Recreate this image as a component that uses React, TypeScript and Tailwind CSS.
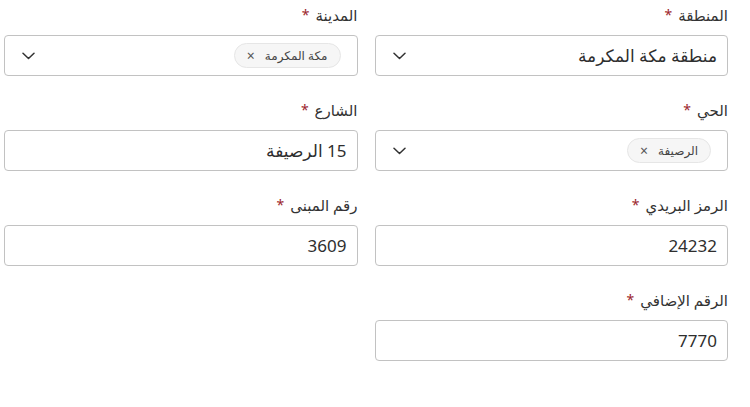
import React from "react";

const Chevron = () => (
  <svg width="13" height="8" viewBox="0 0 13 8" fill="none" className="shrink-0">
    <path d="M1 1.2 L6.5 6.5 L12 1.2" stroke="#333" strokeWidth="1.5" strokeLinecap="round" strokeLinejoin="round" />
  </svg>
);

const Label = ({ text }: { text: string }) => (
  <div className="h-[20px] mb-[10px] flex items-center text-[15px] leading-[20px] text-[#333]">
    <span>{text}</span>
    <span className="text-[#9c1f2e] mr-[6px] text-[14px]">*</span>
  </div>
);

const Chip = ({ text }: { text: string }) => (
  <span className="inline-flex items-center h-[25px] px-[12px] gap-[10px] rounded-full bg-[#f6f6f6] border border-[#e6e6e6] text-[12px] text-[#444]">
    <span>{text}</span>
    <span className="text-[14px] text-[#555] leading-none">×</span>
  </span>
);

const SelectBox = ({ value, chip }: { value?: string; chip?: string }) => (
  <div className="h-[41px] border border-[#c2c2c2] rounded-[4px] bg-white flex items-center justify-between pr-[16px] pl-[17px]">
    {chip ? <Chip text={chip} /> : <span className="text-[17px] text-[#2e2e2e] pr-[-6px] -mr-[6px]">{value}</span>}
    <Chevron />
  </div>
);

const InputBox = ({ value }: { value: string }) => (
  <div className="h-[41px] border border-[#c2c2c2] rounded-[4px] bg-white flex items-center pr-[10px] text-[17px] text-[#2e2e2e]">
    {value}
  </div>
);

const Field = ({ label, children }: { label: string; children: React.ReactNode }) => (
  <div>
    <Label text={label} />
    {children}
  </div>
);

export default function App() {
  return (
    <div
      dir="rtl"
      className="w-[750px] h-[407px] bg-white pt-[5px] pr-[22px] pl-[4px]"
      style={{ fontFamily: '"Noto Sans", "DejaVu Sans", sans-serif' }}
    >
      <div className="grid grid-cols-2 gap-x-[17px] gap-y-[24px]">
        <Field label="المنطقة">
          <SelectBox value="منطقة مكة المكرمة" />
        </Field>
        <Field label="المدينة">
          <SelectBox chip="مكة المكرمة" />
        </Field>
        <Field label="الحي">
          <SelectBox chip="الرصيفة" />
        </Field>
        <Field label="الشارع">
          <InputBox value="15 الرصيفة" />
        </Field>
        <Field label="الرمز البريدي">
          <InputBox value="24232" />
        </Field>
        <Field label="رقم المبنى">
          <InputBox value="3609" />
        </Field>
        <Field label="الرقم الإضافي">
          <InputBox value="7770" />
        </Field>
        <div />
      </div>
    </div>
  );
}
